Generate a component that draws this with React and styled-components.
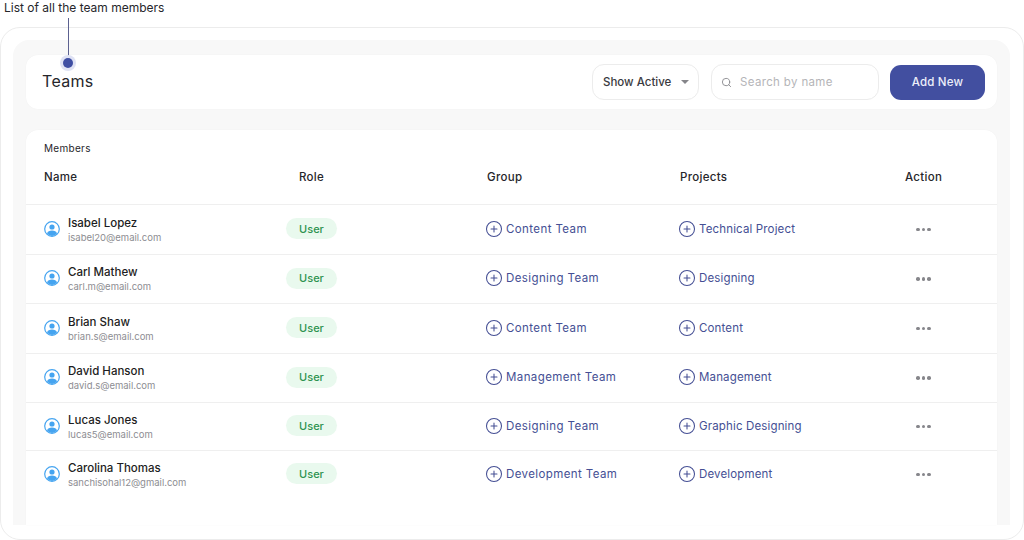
import React from "react";
import styled, { createGlobalStyle } from "styled-components";
import { CirclePlus, Search } from "lucide-react";

const GlobalStyle = createGlobalStyle`
  html, body {
    margin: 0;
    padding: 0;
    background: #fff;
  }
  body {
    width: 1024px;
    height: 540px;
    overflow: hidden;
    font-family: Inter, "Open Sans", "Liberation Sans", sans-serif;
    color: #1d1d22;
  }
`;

const Page = styled.div`
  position: relative;
  width: 1024px;
  height: 540px;
`;

const Caption = styled.div`
  height: 27px;
  padding: 1px 0 0 4px;
  box-sizing: border-box;
  font-size: 12px;
  line-height: 13px;
  color: #26262b;
`;

const Marker = styled.div`
  position: absolute;
  left: 61px;
  top: 18px;
  width: 14px;
  display: flex;
  flex-direction: column;
  align-items: center;
  z-index: 2;
`;

const MarkerLine = styled.div`
  width: 1px;
  height: 40px;
  background: #5c6190;
`;

const MarkerDot = styled.div`
  width: 10px;
  height: 10px;
  border-radius: 50%;
  background: #3f4ea3;
  box-shadow: 0 0 0 3px #dfe2f4;
`;

const Frame = styled.div`
  width: 1024px;
  height: 513px;
  box-sizing: border-box;
  padding: 12px 13px 14px 12px;
  background: #fff;
  border: 1px solid #ececec;
  border-radius: 20px;
`;

const Panel = styled.div`
  height: 100%;
  box-sizing: border-box;
  padding: 15px 13px 0;
  display: flex;
  flex-direction: column;
  gap: 21px;
  background: #f8f8f8;
  border-radius: 16px 16px 0 0;
`;

const TopBar = styled.header`
  height: 54px;
  flex: none;
  box-sizing: border-box;
  padding: 0 12px 0 16px;
  display: flex;
  align-items: center;
  gap: 12px;
  background: #fff;
  border-radius: 12px;
  box-shadow: 0 0 1px #ececec;
`;

const Title = styled.h1`
  margin: 0 auto 2px 0;
  font-size: 16px;
  font-weight: 400;
  letter-spacing: 0.3px;
  color: #26262b;
`;

const Select = styled.button`
  width: 107px;
  height: 36px;
  padding: 0 9px 0 10px;
  display: flex;
  align-items: center;
  justify-content: space-between;
  font: inherit;
  font-size: 11.5px;
  font-weight: 500;
  color: #3a3a40;
  background: #fff;
  border: 1px solid #ececec;
  border-radius: 12px;
`;

const Caret = styled.span`
  width: 0;
  height: 0;
  border-left: 4px solid transparent;
  border-right: 4px solid transparent;
  border-top: 4px solid #85858a;
`;

const SearchBox = styled.div`
  width: 168px;
  height: 36px;
  box-sizing: border-box;
  padding: 0 9px;
  display: flex;
  align-items: center;
  gap: 8px;
  font-size: 11.5px;
  letter-spacing: 0.35px;
  color: #b5b5b8;
  background: #fff;
  border: 1px solid #ececec;
  border-radius: 12px;
`;

const AddButton = styled.button`
  width: 95px;
  height: 35px;
  margin-left: -1px;
  padding: 0;
  font: inherit;
  font-size: 11.5px;
  font-weight: 500;
  letter-spacing: 0.2px;
  color: #eceefa;
  background: #424fa0;
  border: none;
  border-radius: 11px;
`;

const Card = styled.section`
  flex: 1;
  background: #fff;
  border-radius: 12px 12px 0 0;
  box-shadow: 0 0 1px #ececec;
`;

const CardLabel = styled.div`
  height: 38px;
  box-sizing: border-box;
  padding: 12px 0 0 18px;
  font-size: 10px;
  line-height: 12px;
  letter-spacing: 0.3px;
  color: #26262b;
`;

const Row = styled.div`
  height: ${(p) => p.$height}px;
  box-sizing: border-box;
  padding: 0 0 2px 18px;
  display: grid;
  grid-template-columns: 242px 201px 193px 225px 1fr;
  align-items: center;
  border-bottom: ${(p) => (p.$last ? "none" : "1px solid #efefef")};
`;

const HeadRow = styled(Row)`
  padding-bottom: 19px;
`;

const HeadCell = styled.div`
  padding-left: ${(p) => p.$indent || 0}px;
  font-size: 11.5px;
  font-weight: 500;
  letter-spacing: 0.3px;
  color: #26262b;
`;

const Person = styled.div`
  display: flex;
  align-items: center;
  gap: 8px;
`;

const PersonText = styled.div`
  padding-top: 2px;
  display: flex;
  flex-direction: column;
  gap: 2px;
`;

const PersonName = styled.div`
  font-size: 11.5px;
  line-height: 14px;
  font-weight: 500;
  color: #1d1d22;
`;

const Email = styled.div`
  font-size: 9.5px;
  line-height: 12px;
  color: #8d8d92;
`;

const RolePill = styled.span`
  width: 51px;
  height: 21px;
  display: flex;
  align-items: center;
  justify-content: center;
  font-size: 11px;
  font-weight: 500;
  color: #2e9350;
  background: #e9f9ee;
  border-radius: 11px;
`;

const LinkCell = styled.div`
  display: flex;
  align-items: center;
  gap: 3px;
  font-size: 11.5px;
  letter-spacing: ${(p) => p.$spacing}px;
  color: #454f94;

  svg {
    margin-left: -2px;
  }
`;

const Dots = styled.div`
  margin-top: 2px;
  padding-left: 11px;
  display: flex;
  gap: 2px;
`;

const Dot = styled.span`
  width: 3.5px;
  height: 3.5px;
  border-radius: 50%;
  background: #86868b;
`;

const Avatar = () => (
  <svg width="16" height="16" viewBox="0 0 16 16">
    <circle cx="8" cy="8" r="7.3" fill="#fff" stroke="#45a4f0" strokeWidth="1.2" />
    <circle cx="8" cy="6" r="2.6" fill="#45a4f0" />
    <path d="M3 12.4C3.6 10.2 5.5 9.4 8 9.4s4.4.8 5 3A7 7 0 0 1 8 15a7 7 0 0 1-5-2.6Z" fill="#45a4f0" />
  </svg>
);

const members = [
  { name: "Isabel Lopez", email: "isabel20@email.com", group: "Content Team", project: "Technical Project", height: 50 },
  { name: "Carl Mathew", email: "carl.m@email.com", group: "Designing Team", project: "Designing", height: 49 },
  { name: "Brian Shaw", email: "brian.s@email.com", group: "Content Team", project: "Content", height: 50 },
  { name: "David Hanson", email: "david.s@email.com", group: "Management Team", project: "Management", height: 49 },
  { name: "Lucas Jones", email: "lucas5@email.com", group: "Designing Team", project: "Graphic Designing", height: 48 },
  { name: "Carolina Thomas", email: "sanchisohal12@gmail.com", group: "Development Team", project: "Development", height: 47, last: true },
];

export default function App() {
  return (
    <Page>
      <GlobalStyle />
      <Caption>List of all the team members</Caption>
      <Marker>
        <MarkerLine />
        <MarkerDot />
      </Marker>
      <Frame>
        <Panel>
          <TopBar>
            <Title>Teams</Title>
            <Select>
              Show Active
              <Caret />
            </Select>
            <SearchBox>
              <Search size={11} color="#8a8a8e" />
              Search by name
            </SearchBox>
            <AddButton>Add New</AddButton>
          </TopBar>
          <Card>
            <CardLabel>Members</CardLabel>
            <HeadRow $height={37}>
              <HeadCell>Name</HeadCell>
              <HeadCell $indent={13}>Role</HeadCell>
              <HeadCell>Group</HeadCell>
              <HeadCell>Projects</HeadCell>
              <HeadCell>Action</HeadCell>
            </HeadRow>
            {members.map((m) => (
              <Row key={m.email} $height={m.height} $last={m.last}>
                <Person>
                  <Avatar />
                  <PersonText>
                    <PersonName>{m.name}</PersonName>
                    <Email>{m.email}</Email>
                  </PersonText>
                </Person>
                <RolePill>User</RolePill>
                <LinkCell $spacing={0.4}>
                  <CirclePlus size={18} strokeWidth={1.4} />
                  {m.group}
                </LinkCell>
                <LinkCell $spacing={0.15}>
                  <CirclePlus size={18} strokeWidth={1.4} />
                  {m.project}
                </LinkCell>
                <Dots>
                  <Dot />
                  <Dot />
                  <Dot />
                </Dots>
              </Row>
            ))}
          </Card>
        </Panel>
      </Frame>
    </Page>
  );
}
